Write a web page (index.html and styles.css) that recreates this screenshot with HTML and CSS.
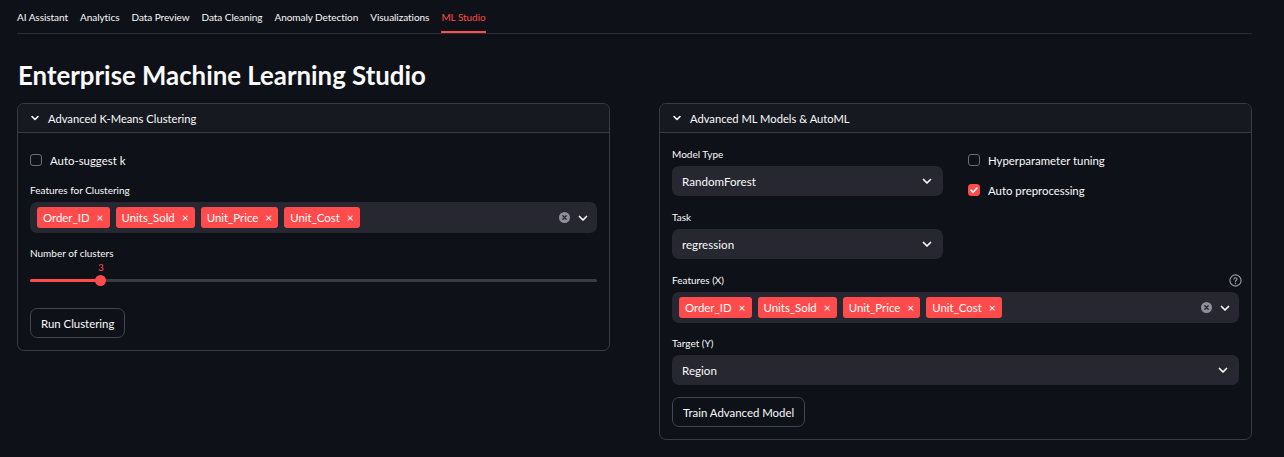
FILE: index.html
```html
<!DOCTYPE html>
<html lang="en">
<head>
<meta charset="utf-8">
<title>ML Studio</title>
<link rel="stylesheet" href="styles.css">
</head>
<body>
<div class="app">
  <nav class="tabs">
    <span class="tab">AI Assistant</span>
    <span class="tab">Analytics</span>
    <span class="tab">Data Preview</span>
    <span class="tab">Data Cleaning</span>
    <span class="tab">Anomaly Detection</span>
    <span class="tab">Visualizations</span>
    <span class="tab active">ML Studio</span>
  </nav>

  <h1 class="title">Enterprise Machine Learning Studio</h1>

  <div class="cols">
    <section class="expander">
      <header class="exp-head">
        <svg class="exp-chev" width="10" height="10" viewBox="0 0 10 10"><path d="M2 3.5 L5 6.5 L8 3.5" fill="none" stroke="#fafafa" stroke-width="1.6" stroke-linecap="round" stroke-linejoin="round"/></svg>
        <span>Advanced K-Means Clustering</span>
      </header>
      <div class="exp-body">
        <label class="check"><span class="box"></span><span>Auto-suggest k</span></label>
        <div class="label gap-10">Features for Clustering</div>
        <div class="multi">
          <div class="tags">
            <span class="tag">Order_ID<span class="x">×</span></span>
            <span class="tag">Units_Sold<span class="x">×</span></span>
            <span class="tag">Unit_Price<span class="x">×</span></span>
            <span class="tag">Unit_Cost<span class="x">×</span></span>
          </div>
          <div class="ms-icons">
            <span class="clear"><svg width="11" height="11" viewBox="0 0 11 11"><circle cx="5.5" cy="5.5" r="5.5" fill="#8e9099"/><path d="M3.8 3.8 L7.2 7.2 M7.2 3.8 L3.8 7.2" stroke="#262730" stroke-width="1.4" stroke-linecap="round"/></svg></span>
            <svg class="chev" width="12" height="12" viewBox="0 0 12 12"><path d="M2.5 4.5 L6 8 L9.5 4.5" fill="none" stroke="#fafafa" stroke-width="1.7" stroke-linecap="round" stroke-linejoin="round"/></svg>
          </div>
        </div>
        <div class="label gap-13 slider-label">Number of clusters</div>
        <div class="slider">
          <div class="slider-val" style="left: 12.5%">3</div>
          <div class="track">
            <div class="fill" style="width: 12.5%"></div>
            <div class="thumb" style="left: 12.5%"></div>
          </div>
        </div>
        <button class="btn">Run Clustering</button>
      </div>
    </section>

    <section class="expander">
      <header class="exp-head">
        <svg class="exp-chev" width="10" height="10" viewBox="0 0 10 10"><path d="M2 3.5 L5 6.5 L8 3.5" fill="none" stroke="#fafafa" stroke-width="1.6" stroke-linecap="round" stroke-linejoin="round"/></svg>
        <span>Advanced ML Models &amp; AutoML</span>
      </header>
      <div class="exp-body">
        <div class="inner-cols">
          <div class="inner-col">
            <div class="label">Model Type</div>
            <div class="select"><span>RandomForest</span><svg class="chev" width="12" height="12" viewBox="0 0 12 12"><path d="M2.5 4.5 L6 8 L9.5 4.5" fill="none" stroke="#fafafa" stroke-width="1.7" stroke-linecap="round" stroke-linejoin="round"/></svg></div>
            <div class="label gap-14">Task</div>
            <div class="select"><span>regression</span><svg class="chev" width="12" height="12" viewBox="0 0 12 12"><path d="M2.5 4.5 L6 8 L9.5 4.5" fill="none" stroke="#fafafa" stroke-width="1.7" stroke-linecap="round" stroke-linejoin="round"/></svg></div>
          </div>
          <div class="inner-col">
            <label class="check"><span class="box"></span><span>Hyperparameter tuning</span></label>
            <label class="check gap-4"><span class="box checked"><svg width="10" height="10" viewBox="0 0 10 10"><path d="M2 5.2 L4.2 7.3 L8 3" fill="none" stroke="#fff" stroke-width="1.6" stroke-linecap="round" stroke-linejoin="round"/></svg></span><span>Auto preprocessing</span></label>
          </div>
        </div>
        <div class="label-row gap-14">
          <span class="label">Features (X)</span>
          <svg class="help" width="13" height="13" viewBox="0 0 13 13"><circle cx="6.5" cy="6.5" r="5.6" fill="none" stroke="#9a9ca4" stroke-width="1.1"/><path d="M4.9 5.1 C4.9 3.2 8.1 3.2 8.1 5.1 C8.1 6.3 6.5 6.3 6.5 7.6" fill="none" stroke="#9a9ca4" stroke-width="1.1" stroke-linecap="round"/><circle cx="6.5" cy="9.5" r="0.7" fill="#9a9ca4"/></svg>
        </div>
        <div class="multi">
          <div class="tags">
            <span class="tag">Order_ID<span class="x">×</span></span>
            <span class="tag">Units_Sold<span class="x">×</span></span>
            <span class="tag">Unit_Price<span class="x">×</span></span>
            <span class="tag">Unit_Cost<span class="x">×</span></span>
          </div>
          <div class="ms-icons">
            <span class="clear"><svg width="11" height="11" viewBox="0 0 11 11"><circle cx="5.5" cy="5.5" r="5.5" fill="#8e9099"/><path d="M3.8 3.8 L7.2 7.2 M7.2 3.8 L3.8 7.2" stroke="#262730" stroke-width="1.4" stroke-linecap="round"/></svg></span>
            <svg class="chev" width="12" height="12" viewBox="0 0 12 12"><path d="M2.5 4.5 L6 8 L9.5 4.5" fill="none" stroke="#fafafa" stroke-width="1.7" stroke-linecap="round" stroke-linejoin="round"/></svg>
          </div>
        </div>
        <div class="label gap-13">Target (Y)</div>
        <div class="select"><span>Region</span><svg class="chev" width="12" height="12" viewBox="0 0 12 12"><path d="M2.5 4.5 L6 8 L9.5 4.5" fill="none" stroke="#fafafa" stroke-width="1.7" stroke-linecap="round" stroke-linejoin="round"/></svg></div>
        <button class="btn gap-12">Train Advanced Model</button>
      </div>
    </section>
  </div>
</div>
</body>
</html>
```

FILE: styles.css
```css
* { box-sizing: border-box; }
html, body { margin: 0; padding: 0; }
body {
  background: #0e1117;
  color: #fafafa;
  font-family: "Lato", "Noto Sans", sans-serif;
  width: 1284px;
  height: 457px;
  overflow: hidden;
}
.app {
  width: 1235px;
  margin-left: 17px;
}
.tabs {
  display: flex;
  gap: 12px;
  height: 34px;
  border-bottom: 1px solid #2b2d34;
  align-items: stretch;
}
.tab {
  font-size: 10px;
  letter-spacing: -0.05px;
  line-height: 34px;
  color: #fafafa;
  white-space: nowrap;
}
.tab.active {
  color: #ff4b4b;
  box-shadow: inset 0 -2px 0 #ff4b4b;
}
.title {
  margin: 26px 0 0 1px;
  font-size: 25.8px;
  line-height: 30px;
  font-weight: 700;
  color: #fafafa;
}
.cols {
  display: flex;
  gap: 49px;
  align-items: flex-start;
  margin-top: 13px;
}
.expander {
  flex: 1 1 0;
  border: 1px solid #393b42;
  border-radius: 7px;
  overflow: hidden;
}
.exp-head {
  display: flex;
  align-items: center;
  height: 29px;
  padding-left: 12px;
  background: #171920;
  border-bottom: 1px solid #393b42;
  font-size: 11.2px;
}
.exp-chev { margin-right: 8px; margin-left: 0; }
.exp-body {
  display: flex;
  flex-direction: column;
  align-items: stretch;
  padding: 14px 12px 12px;
}
.check {
  display: flex;
  align-items: center;
  height: 26px;
  font-size: 11.4px;
  gap: 8px;
}
.box {
  width: 12px;
  height: 12px;
  border: 1px solid #6c6e76;
  border-radius: 3px;
  display: flex;
  align-items: center;
  justify-content: center;
}
.box.checked {
  background: #ff4b4b;
  border-color: #ff4b4b;
}
.label {
  font-size: 10px;
  line-height: 14px;
  height: 14px;
  margin-bottom: 5px;
  color: #fafafa;
}
.slider-label { margin-bottom: 0; }
.label-row {
  display: flex;
  justify-content: space-between;
  align-items: center;
  height: 14px;
  margin-bottom: 5px;
}
.label-row .label { margin: 0; }
.help { margin-right: -3px; }
.gap-4 { margin-top: 4px; }
.gap-10 { margin-top: 10px; }
.gap-12 { margin-top: 12px; }
.gap-13 { margin-top: 13px; }
.gap-14 { margin-top: 14px; }
.multi {
  display: flex;
  align-items: center;
  justify-content: space-between;
  height: 31px;
  background: #262730;
  border-radius: 7px;
  padding: 0 8px 0 7px;
}
.tags { display: flex; gap: 6px; }
.tag {
  display: flex;
  align-items: center;
  height: 21px;
  padding: 0 6px;
  background: #ff4b4b;
  border-radius: 3px;
  font-size: 11.4px;
  color: #fff;
}
.tag .x {
  margin-left: 7px;
  font-size: 12px;
}
.ms-icons {
  display: flex;
  align-items: center;
  gap: 7px;
}
.clear { display: flex; }
.select {
  display: flex;
  align-items: center;
  justify-content: space-between;
  height: 30px;
  background: #262730;
  border-radius: 7px;
  padding: 0 10px 0 10px;
  font-size: 11.6px;
}
.slider {
  position: relative;
  height: 37px;
}
.slider-val {
  position: absolute;
  top: 1px;
  transform: translateX(-50%);
  font-size: 10px;
  line-height: 12px;
  color: #ff4b4b;
}
.track {
  position: absolute;
  left: 0;
  right: 0;
  top: 19px;
  height: 3px;
  background: #3a3c43;
  border-radius: 2px;
}
.fill {
  height: 100%;
  background: #ff4b4b;
  border-radius: 2px;
}
.thumb {
  position: absolute;
  top: -4px;
  width: 11px;
  height: 11px;
  margin-left: -5.5px;
  border-radius: 50%;
  background: #ff4b4b;
}
.btn {
  align-self: flex-start;
  height: 30px;
  padding: 0 10px;
  background: #0e1117;
  border: 1px solid #43454c;
  border-radius: 7px;
  color: #fafafa;
  font-family: inherit;
  font-size: 11.4px;
  margin-top: 12px;
}
.slider + .btn { margin-top: 11px; }
.inner-cols {
  display: flex;
  gap: 25px;
}
.inner-col {
  flex: 1 1 0;
  display: flex;
  flex-direction: column;
}
```
